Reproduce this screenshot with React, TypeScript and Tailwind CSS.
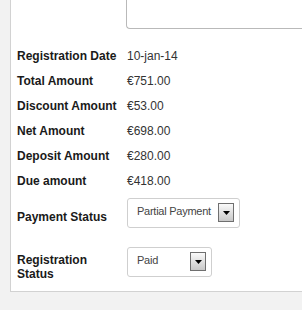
import React from "react";

function Arrow() {
  return (
    <div className="absolute right-[6px] top-[5px] w-[16px] h-[19px] border border-[#6f6f6f] bg-gradient-to-b from-[#fafafa] to-[#c8c8c8] flex items-center justify-center">
      <svg width="7" height="4" viewBox="0 0 7 4">
        <polygon points="0,0 7,0 3.5,4" fill="#000" />
      </svg>
    </div>
  );
}

function Select({ text, width }: { text: string; width: string }) {
  return (
    <div className={`relative h-[30px] ${width} border border-[#cfcfcf] rounded-[3px] bg-white pl-[9px] pt-[5px] text-[11px] leading-[15px] tracking-[-0.25px] text-[#444] whitespace-nowrap`}>
      {text}
    </div>
  );
}

const rows: [string, string][] = [
  ["Registration Date", "10-jan-14"],
  ["Total Amount", "€751.00"],
  ["Discount Amount", "€53.00"],
  ["Net Amount", "€698.00"],
  ["Deposit Amount", "€280.00"],
  ["Due amount", "€418.00"],
];

export default function App() {
  return (
    <div
      className="w-[302px] h-[310px] bg-[#f2f2f2] overflow-hidden"
      style={{ fontFamily: '"Liberation Sans", Arial, sans-serif' }}
    >
      <div className="ml-[10px] h-[292px] bg-white border-l border-b border-[#d2d2d2] overflow-hidden">
        <div className="ml-[115px] w-[200px] h-[29px] border-l border-b border-[#b9b9b9] rounded-bl-[4px]" />
        <div className="mt-[14px] pl-[6px]">
          {rows.map(([l, v]) => (
            <div key={l} className="flex h-[25px] items-center text-[12px]">
              <div className="w-[110px] font-bold text-[#1a1a1a]">{l}</div>
              <div className="text-[#333]">{v}</div>
            </div>
          ))}
          <div className="flex items-start mt-[5px]">
            <div className="w-[110px] pt-[12px] font-bold text-[12px] leading-[15px] text-[#1a1a1a]">
              Payment Status
            </div>
            <div className="relative">
              <Select text="Partial Payment" width="w-[113px]" />
              <Arrow />
            </div>
          </div>
          <div className="flex items-start mt-[19px]">
            <div className="w-[110px] pt-[6px] font-bold text-[12px] leading-[14px] text-[#1a1a1a]">
              Registration
              <br />
              Status
            </div>
            <div className="relative">
              <Select text="Paid" width="w-[85px]" />
              <Arrow />
            </div>
          </div>
        </div>
      </div>
    </div>
  );
}
